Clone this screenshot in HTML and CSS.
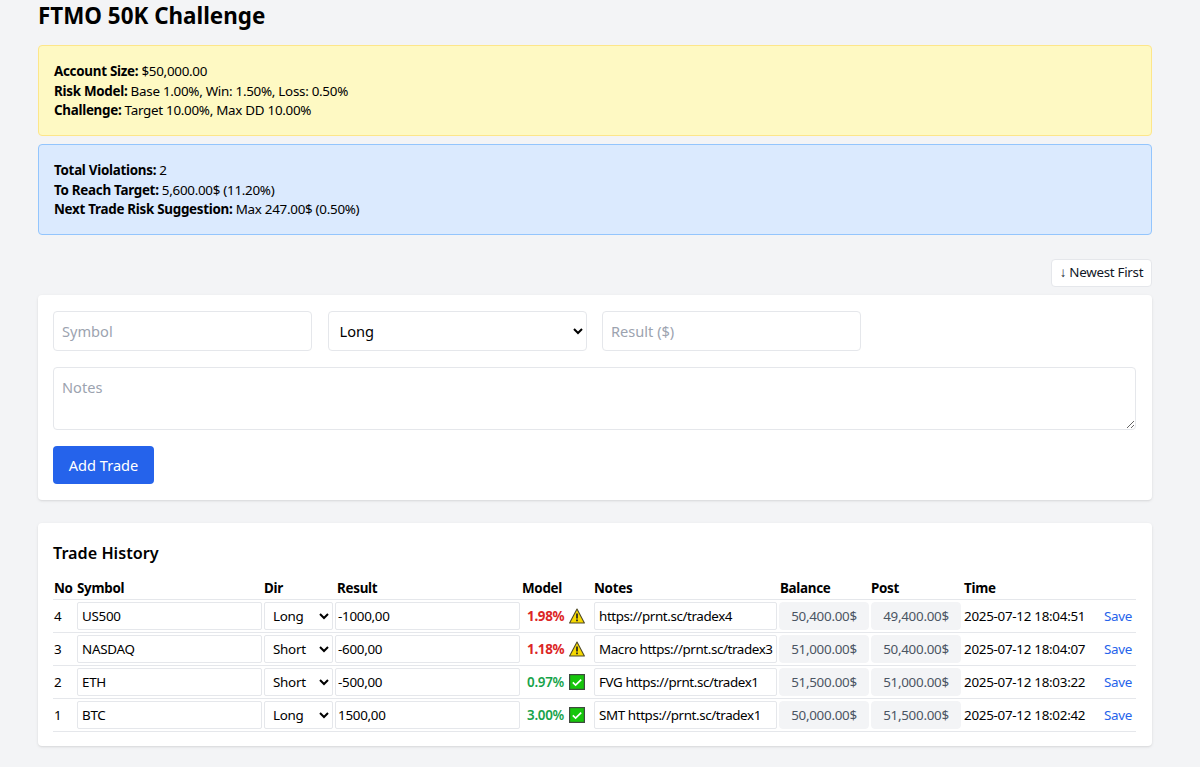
FILE: index.html
```html
<!DOCTYPE html>
<html lang="en">
<head>
<meta charset="utf-8">
<title>FTMO 50K Challenge</title>
<link rel="stylesheet" href="styles.css">
</head>
<body>
<main class="page">
  <h1 class="title">FTMO 50K Challenge</h1>
  <section class="notice notice-yellow">
    <div><b>Account Size:</b> $50,000.00</div>
    <div><b>Risk Model:</b> Base 1.00%, Win: 1.50%, Loss: 0.50%</div>
    <div><b>Challenge:</b> Target 10.00%, Max DD 10.00%</div>
  </section>
  <section class="notice notice-blue">
    <div><b>Total Violations:</b> 2</div>
    <div><b>To Reach Target:</b> 5,600.00$ (11.20%)</div>
    <div><b>Next Trade Risk Suggestion:</b> Max 247.00$ (0.50%)</div>
  </section>
  <div class="sort-row"><button class="sort-btn" type="button">↓ Newest First</button></div>
  <section class="card form-card">
    <div class="form-grid">
      <input class="field" placeholder="Symbol">
      <select class="field field-select"><option>Long</option><option>Short</option></select>
      <input class="field" placeholder="Result ($)">
    </div>
    <textarea class="field notes" placeholder="Notes"></textarea>
    <button class="add-btn" type="button">Add Trade</button>
  </section>
  <section class="card history-card">
    <h2 class="history-title">Trade History</h2>
    <table class="trades">
      <colgroup>
        <col class="c-no"><col class="c-sym"><col class="c-dir"><col class="c-res"><col class="c-model"><col class="c-notes"><col class="c-bal"><col class="c-post"><col class="c-time"><col class="c-save">
      </colgroup>
      <thead>
        <tr><th>No</th><th>Symbol</th><th>Dir</th><th class="th-res">Result</th><th>Model</th><th class="th-notes">Notes</th><th class="th-bal">Balance</th><th>Post</th><th class="th-time">Time</th><th></th></tr>
      </thead>
      <tbody>
        <tr>
          <td class="no">4</td>
          <td><input class="cell" value="US500"></td>
          <td><select class="cell cell-select"><option selected>Long</option><option>Short</option></select></td>
          <td><input class="cell cell-num" value="-1000,00"></td>
          <td class="model"><span class="bad">1.98%</span><svg class="ico" viewBox="0 0 16 16"><path d="M8 1 15.4 15H.6Z" fill="#f7d900" stroke="#4f4a2a" stroke-width="1.1" stroke-linejoin="round"/><path d="M8 5.4v5.2" stroke="#222" stroke-width="1.7"/><path d="M8 11.6v1.7" stroke="#222" stroke-width="1.7"/></svg></td>
          <td><input class="cell cell-note" value="https://prnt.sc/tradex4"></td>
          <td><input class="cell ro" value="50,400.00$" readonly></td>
          <td><input class="cell ro" value="49,400.00$" readonly></td>
          <td class="time">2025-07-12 18:04:51</td>
          <td class="save"><a href="#">Save</a></td>
        </tr>
        <tr>
          <td class="no">3</td>
          <td><input class="cell" value="NASDAQ"></td>
          <td><select class="cell cell-select"><option>Long</option><option selected>Short</option></select></td>
          <td><input class="cell cell-num" value="-600,00"></td>
          <td class="model"><span class="bad">1.18%</span><svg class="ico" viewBox="0 0 16 16"><path d="M8 1 15.4 15H.6Z" fill="#f7d900" stroke="#4f4a2a" stroke-width="1.1" stroke-linejoin="round"/><path d="M8 5.4v5.2" stroke="#222" stroke-width="1.7"/><path d="M8 11.6v1.7" stroke="#222" stroke-width="1.7"/></svg></td>
          <td><input class="cell cell-note" value="Macro https://prnt.sc/tradex3"></td>
          <td><input class="cell ro" value="51,000.00$" readonly></td>
          <td><input class="cell ro" value="50,400.00$" readonly></td>
          <td class="time">2025-07-12 18:04:07</td>
          <td class="save"><a href="#">Save</a></td>
        </tr>
        <tr>
          <td class="no">2</td>
          <td><input class="cell" value="ETH"></td>
          <td><select class="cell cell-select"><option>Long</option><option selected>Short</option></select></td>
          <td><input class="cell cell-num" value="-500,00"></td>
          <td class="model"><span class="good">0.97%</span><svg class="ico ico-check" viewBox="0 0 16 16"><rect x=".6" y=".6" width="14.8" height="14.8" fill="#16c60c" stroke="#3f4a3f" stroke-width="1.2"/><path d="M3.8 8.4 6.6 11 12.2 5.6" fill="none" stroke="#fff" stroke-width="1.7"/></svg></td>
          <td><input class="cell cell-note" value="FVG https://prnt.sc/tradex1"></td>
          <td><input class="cell ro" value="51,500.00$" readonly></td>
          <td><input class="cell ro" value="51,000.00$" readonly></td>
          <td class="time">2025-07-12 18:03:22</td>
          <td class="save"><a href="#">Save</a></td>
        </tr>
        <tr>
          <td class="no">1</td>
          <td><input class="cell" value="BTC"></td>
          <td><select class="cell cell-select"><option selected>Long</option><option>Short</option></select></td>
          <td><input class="cell cell-num" value="1500,00"></td>
          <td class="model"><span class="good">3.00%</span><svg class="ico ico-check" viewBox="0 0 16 16"><rect x=".6" y=".6" width="14.8" height="14.8" fill="#16c60c" stroke="#3f4a3f" stroke-width="1.2"/><path d="M3.8 8.4 6.6 11 12.2 5.6" fill="none" stroke="#fff" stroke-width="1.7"/></svg></td>
          <td><input class="cell cell-note" value="SMT https://prnt.sc/tradex1"></td>
          <td><input class="cell ro" value="50,000.00$" readonly></td>
          <td><input class="cell ro" value="51,500.00$" readonly></td>
          <td class="time">2025-07-12 18:02:42</td>
          <td class="save"><a href="#">Save</a></td>
        </tr>
      </tbody>
    </table>
  </section>
</main>
</body>
</html>
```

FILE: styles.css
```css
* { box-sizing: border-box; }
html, body { margin: 0; padding: 0; }
body {
  background: #f3f4f6;
  color: #000;
  font-family: "Noto Sans", "Open Sans", sans-serif;
  font-size: 13.4px;
  line-height: 19.5px;
}
.page { width: 1114px; margin: 0 0 0 38px; padding-bottom: 21px; }
.title { margin: 0 0 13px; font-size: 22.4px; line-height: 32px; font-weight: 700; }
.notice {
  height: 91px;
  padding: 16px 15px 0;
  margin-bottom: 8px;
  border: 1px solid;
  border-radius: 4px;
  letter-spacing: -.28px;
}
.notice b { font-weight: 700; }
.notice-yellow { background: #fef9c3; border-color: #fde68a; }
.notice-blue { background: #dbeafe; border-color: #93c5fd; }
.sort-row { display: flex; justify-content: flex-end; margin: 24px 0 8px; }
.sort-btn {
  height: 28px;
  width: 101px;
  padding: 0;
  background: #fff;
  border: 1px solid #e5e7eb;
  border-radius: 4px;
  font: inherit;
  letter-spacing: -.3px;
  color: #111827;
}
.card {
  background: #fff;
  border-radius: 4px;
  box-shadow: 0 1px 3px rgba(0,0,0,.1), 0 1px 2px -1px rgba(0,0,0,.1);
  padding: 16px 16px 16px 15px;
}
.form-card { height: 205px; }
.form-grid { display: grid; grid-template-columns: repeat(3, 259px); column-gap: 15.5px; }
.field {
  height: 40px;
  width: 100%;
  padding: 0 8px;
  background: #fff;
  border: 1px solid #e5e7eb;
  border-radius: 4px;
  font: inherit;
  font-size: 14.6px;
  color: #000;
}
.field::placeholder { color: #9ca3af; opacity: 1; }
.field-select { padding-left: 7px; }
.notes {
  display: block;
  width: 100%;
  height: 63px;
  margin: 16px 0;
  padding: 8px;
  line-height: 22px;
}
.add-btn {
  display: block;
  width: 101px;
  height: 38px;
  padding: 1px 0 0;
  background: #2563eb;
  color: #fff;
  border: 0;
  border-radius: 4px;
  font: inherit;
  font-size: 14.6px;
}
.history-card { height: 223px; margin-top: 23px; padding-top: 18px; }
.history-title { margin: 0 0 14px; font-size: 16.2px; line-height: 24px; font-weight: 600; }
.trades { width: 100%; table-layout: fixed; border-collapse: collapse; letter-spacing: -.28px; }
.c-no { width: 23px; }
.c-sym { width: 187px; }
.c-dir { width: 71px; }
.c-res { width: 187px; }
.c-model { width: 72px; }
.c-notes { width: 185px; }
.c-bal { width: 92px; }
.c-post { width: 92px; }
.c-time { width: 138px; }
.c-save { width: 36px; }
.trades th {
  padding: 0 0 0 1px;
  height: 20px;
  line-height: 19px;
  text-align: left;
  font-weight: 700;
  border-bottom: 1px solid #e5e7eb;
}
.trades .th-res { padding-left: 3px; }
.trades .th-notes { padding-left: 1px; }
.trades .th-bal { padding-left: 2px; }
.trades .th-time { padding-left: 2px; }
.trades td {
  height: 33px;
  padding: 2px 1px;
  border-bottom: 1px solid #e5e7eb;
  white-space: nowrap;
}
.trades .no { padding-top: 3px; padding-bottom: 1px; }
.cell {
  display: block;
  width: 100%;
  height: 28px;
  padding: 0 2px 0 4px;
  background: #fff;
  border: 1px solid #e5e7eb;
  border-radius: 2px;
  font: inherit;
  letter-spacing: inherit;
  color: #000;
}
.cell-select { padding-left: 4px; }
.cell-num { padding-left: 2px; }
.cell-note { letter-spacing: -.4px; }
.ro { background: #f3f4f6; border-color: #f3f4f6; border-radius: 4px; color: #4b5563; text-align: center; padding: 0 2px; }
.trades .model { padding: 3px 1px 1px 6px; }
.bad { color: #dc2626; font-weight: 700; }
.good { color: #16a34a; font-weight: 600; }
.ico { width: 16px; height: 16px; margin-left: 5px; vertical-align: -3px; }
.trades .time { padding: 3px 1px 1px 2px; }
.trades .save { padding: 3px 1px 1px 4px; }
.save a { color: #2563eb; text-decoration: none; }
```
